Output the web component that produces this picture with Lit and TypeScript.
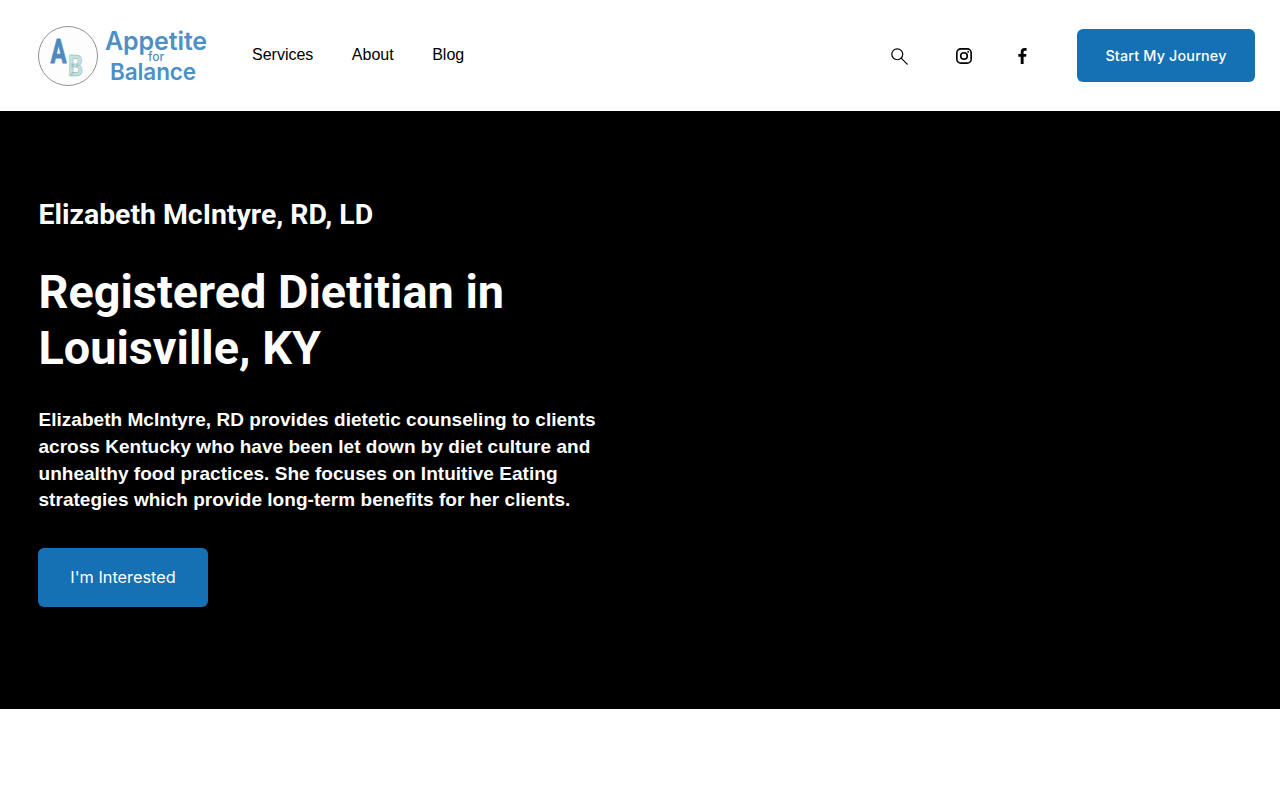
import { LitElement, html, css } from "lit";
import { customElement } from "lit/decorators.js";

@customElement("app-root")
export class AppRoot extends LitElement {
  static styles = css`
    :host { display: block; width: 1280px; height: 800px; background: #fff; overflow: hidden; font-family: "Liberation Sans", Arial, sans-serif; }
    header { height: 111px; box-sizing: border-box; display: flex; align-items: center; padding: 0 25px 0 38px; background: #fff; }
    .logo { display: flex; align-items: center; width: 214px; flex: none; }
    .badge { width: 60px; height: 60px; flex: none; display: block; overflow: visible; }
    .badge text { font-family: Roboto, sans-serif; }
    .wordmark { display: flex; flex-direction: column; align-items: center; width: 104px; margin-left: 6px; color: #4d8fc7; font-family: Inter, sans-serif; line-height: 1; margin-top: 1px; }
    .w1 { font-size: 25px; height: 22px; line-height: 22px; font-weight: 600; letter-spacing: -0.1px; }
    .w2 { font-size: 12px; height: 10px; line-height: 10px; font-weight: 500; }
    .w3 { font-size: 22.5px; height: 20px; line-height: 20px; font-weight: 600; letter-spacing: -0.1px; margin-right: 6px; }
    nav { display: flex; gap: 38.5px; font-size: 16px; color: #000; margin-top: -2px; }
    .spacer { flex: 1; }
    .icons { display: flex; align-items: center; color: #000; margin-top: 1px; }
    .icons svg { display: block; }
    .search { margin-right: 48.5px; }
    .insta { margin-right: 46px; }
    .fb { margin-right: 50px; }
    .btn { background: #1570b4; color: #fff; border-radius: 6px; font-family: Inter, sans-serif; font-weight: 500; display: flex; align-items: center; justify-content: center; box-sizing: border-box; }
    .btn.top { width: 178px; height: 53px; font-size: 14.3px; letter-spacing: 0.2px; }
    .hero { height: 598px; box-sizing: border-box; background: #000; color: #fff; padding: 85px 0 0 38.5px; }
    h2 { margin: 0; font-family: Roboto, sans-serif; font-weight: 700; font-size: 28.4px; line-height: 38px; }
    h1 { margin: 30px 0 0; font-family: Roboto, sans-serif; font-weight: 700; font-size: 46.8px; line-height: 56px; width: 600px; }
    p { margin: 31.4px 0 0; width: 600px; font-weight: 700; font-size: 19px; letter-spacing: 0.03px; line-height: 26.6px; }
    .btn.cta { width: 170px; height: 59px; margin-left: -0.5px; padding-bottom: 1px; font-size: 16.3px; font-weight: 400; margin-top: 34.6px; }
  `;

  render() {
    return html`
      <header>
        <div class="logo">
          <svg class="badge" viewBox="0 0 60 60">
            <circle cx="30" cy="30" r="29.5" fill="#fdfdfd" stroke="#777" stroke-width="0.8"></circle>
            <text x="30" y="49.500" font-size="30" font-weight="700" fill="#c4e4d9" stroke="#7fa9bb" stroke-width="0.5" textLength="15" lengthAdjust="spacingAndGlyphs">B</text>
            <text x="12.500" y="36.500" font-size="33" font-weight="700" fill="#4d8abf" stroke="#4d8abf" stroke-width="0.8" textLength="16" lengthAdjust="spacingAndGlyphs">A</text>
          </svg>
          <div class="wordmark">
            <span class="w1">Appetite</span>
            <span class="w2">for</span>
            <span class="w3">Balance</span>
          </div>
        </div>
        <nav><span>Services</span><span>About</span><span>Blog</span></nav>
        <div class="spacer"></div>
        <div class="icons">
          <svg class="search" width="17" height="17" viewBox="1 1 16.800 16.800" fill="none" stroke="#000" stroke-width="1.200">
            <circle cx="7.200" cy="7.200" r="5.400"></circle>
            <path d="M11 11l6 6" stroke-linecap="round"></path>
          </svg>
          <svg class="insta" width="16" height="16" viewBox="0 0 17 17" fill="none" stroke="#000" stroke-width="1.700">
            <rect x="0.900" y="0.900" width="15.200" height="15.200" rx="4.200"></rect>
            <circle cx="8.500" cy="8.500" r="3.500"></circle>
            <circle cx="12.900" cy="4.100" r="1" fill="#000" stroke="none"></circle>
          </svg>
          <svg class="fb" width="9" height="16" viewBox="0.500 0.500 8.700 16.500" fill="#000">
            <path d="M3 17V9.600H.6V6.700H3V4.600C3 2 4.500.6 6.800.6c1 0 2 .1 2.300.2v2.600H7.500c-1.200 0-1.500.6-1.500 1.500v1.800h2.900l-.4 2.900H6V17z"></path>
          </svg>
        </div>
        <div class="btn top">Start My Journey</div>
      </header>
      <section class="hero">
        <h2>Elizabeth McIntyre, RD, LD</h2>
        <h1>Registered Dietitian in Louisville, KY</h1>
        <p>Elizabeth McIntyre, RD provides dietetic counseling to clients across Kentucky who have been let down by diet culture and unhealthy food practices. She focuses on Intuitive Eating strategies which provide long-term benefits for her clients.</p>
        <div class="btn cta">I'm Interested</div>
      </section>
    `;
  }
}
